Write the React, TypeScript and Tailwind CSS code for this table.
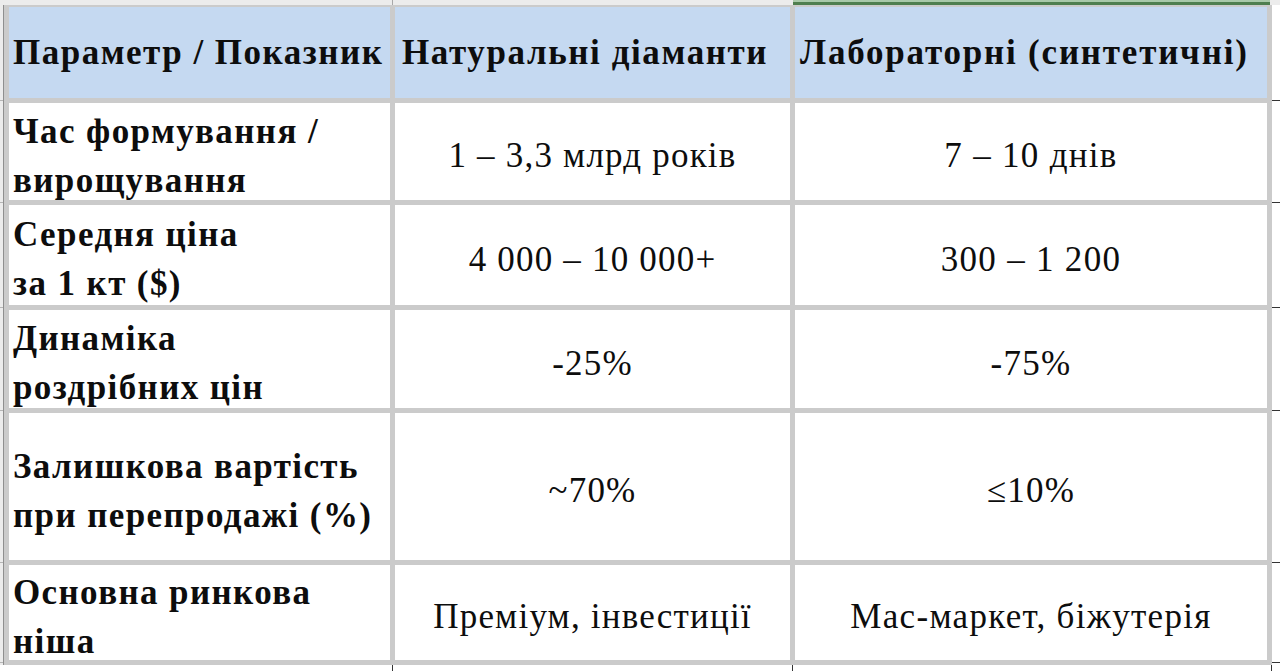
import React from "react";

const rows: { label: [string, string]; nat: string; lab: string }[] = [
  { label: ["Час формування /", "вирощування"], nat: "1 – 3,3 млрд років", lab: "7 – 10 днів" },
  { label: ["Середня ціна", "за 1 кт ($)"], nat: "4 000 – 10 000+", lab: "300 – 1 200" },
  { label: ["Динаміка", "роздрібних цін"], nat: "-25%", lab: "-75%" },
  { label: ["Залишкова вартість", "при перепродажі (%)"], nat: "~70%", lab: "≤10%" },
  { label: ["Основна ринкова", "ніша"], nat: "Преміум, інвестиції", lab: "Мас-маркет, біжутерія" },
];

export default function App() {
  return (
    <div
      className="w-[1280px] h-[671px] bg-white overflow-hidden flex flex-col text-[#0d0d0d]"
      style={{ fontFamily: '"Liberation Serif", "Times New Roman", serif' }}
    >
      {/* top column-header strip */}
      <div className="flex h-[5px]">
        <div className="w-[393px] bg-[#ececec] border-r border-[#a8a8a8]" />
        <div className="w-[400px] bg-[#ececec]" />
        <div className="w-[477px] flex flex-col">
          <div className="h-[2px] bg-[#a9c9a9]" />
          <div className="flex-1 bg-[#4f7f4f]" />
        </div>
        <div className="flex-1 bg-[#ececec]" />
      </div>

      <div className="flex">
        {/* left row-header strip */}
        <div className="w-[4px] bg-[#ececec] border-r border-[#8f8f8f] flex flex-col">
          <div className="h-[96px] border-b border-[#b5b5b5]" />
          <div className="h-[102px] border-b border-[#b5b5b5]" />
          <div className="h-[105px] border-b border-[#b5b5b5]" />
          <div className="h-[103px] border-b border-[#b5b5b5]" />
          <div className="h-[152px] border-b border-[#b5b5b5]" />
          <div className="h-[100px] border-b border-[#b5b5b5]" />
        </div>

        {/* table */}
        <div className="grid grid-cols-[381px_395px_472px] grid-rows-[91px_97px_100px_98px_147px_95px] gap-[5px] bg-[#cbcbcb] pt-[2px] pl-[5px] pr-[5px] pb-[5px] text-[35px] leading-[49px]">
          <div className="bg-[#c5d9f1] flex items-center pl-[4px] font-bold tracking-[1.5px] whitespace-nowrap">
            Параметр / Показник
          </div>
          <div className="bg-[#c5d9f1] flex items-center pl-[7px] font-bold tracking-[1.6px] whitespace-nowrap">
            Натуральні діаманти
          </div>
          <div className="bg-[#c5d9f1] flex items-center pl-[5px] font-bold tracking-[1.8px] whitespace-nowrap">
            Лабораторні (синтетичні)
          </div>
          {rows.map((r, i) => (
            <React.Fragment key={i}>
              <div className="bg-white flex items-center pl-[4px] pt-[8px] font-bold tracking-[1.4px] whitespace-nowrap">
                <div>
                  {r.label[0]}
                  <br />
                  {r.label[1]}
                </div>
              </div>
              <div className="bg-white flex items-center justify-center pt-[8px] tracking-[1.2px] whitespace-nowrap">
                {r.nat}
              </div>
              <div className="bg-white flex items-center justify-center pt-[8px] tracking-[1.3px] whitespace-nowrap">
                {r.lab}
              </div>
            </React.Fragment>
          ))}
        </div>

        {/* right gutter */}
        <div className="flex-1 flex flex-col">
          <div className="h-[96px] border-b border-[#333]" />
          <div className="h-[102px] border-b border-[#333]" />
          <div className="h-[105px] border-b border-[#333]" />
          <div className="h-[103px] border-b border-[#333]" />
          <div className="h-[152px] border-b border-[#333]" />
          <div className="h-[100px] border-b border-[#333]" />
        </div>
      </div>

      {/* bottom strip */}
      <div className="flex flex-1">
        <div className="w-[393px] border-r border-[#333]" />
        <div className="w-[400px] border-r border-[#333]" />
        <div className="w-[479px] border-r border-[#333]" />
      </div>
    </div>
  );
}
